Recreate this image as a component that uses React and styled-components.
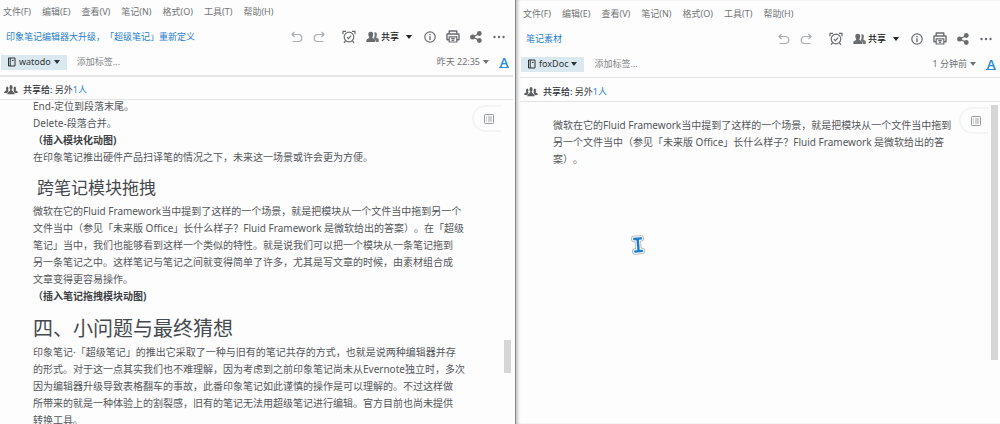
import { createGlobalStyle, styled } from "styled-components";

const menuItems = ["文件(F)", "编辑(E)", "查看(V)", "笔记(N)", "格式(O)", "工具(T)", "帮助(H)"];

export default function App() {
    return (
        <>
            <GlobalStyle />
            <Desktop>
                <NoteWindow
                    title="印象笔记编辑器大升级，「超级笔记」重新定义"
                    notebook="watodo"
                    time="昨天 22:35"
                    thumb={{ top: 240, height: 33 }}
                >
                    <LeftArticle>
                        <p>End-定位到段落末尾。</p>
                        <p>Delete-段落合并。</p>
                        <p><strong>（插入模块化动图)</strong></p>
                        <p>在印象笔记推出硬件产品扫译笔的情况之下，未来这一场景或许会更为方便。</p>
                        <h2>跨笔记模块拖拽</h2>
                        <p>
                            微软在它的Fluid Framework当中提到了这样的一个场景，就是把模块从一个文件当中拖到另一个<br />
                            文件当中（参见「未来版 Office」长什么样子？Fluid Framework 是微软给出的答案）。在「超级<br />
                            笔记」当中，我们也能够看到这样一个类似的特性。就是说我们可以把一个模块从一条笔记拖到<br />
                            另一条笔记之中。这样笔记与笔记之间就变得简单了许多，尤其是写文章的时候，由素材组合成<br />
                            文章变得更容易操作。
                        </p>
                        <p><strong>（插入笔记拖拽模块动图)</strong></p>
                        <h1>四、小问题与最终猜想</h1>
                        <p>
                            印象笔记·「超级笔记」的推出它采取了一种与旧有的笔记共存的方式，也就是说两种编辑器并存<br />
                            的形式。对于这一点其实我们也不难理解，因为考虑到之前印象笔记尚未从Evernote独立时，多次<br />
                            因为编辑器升级导致表格翻车的事故，此番印象笔记如此谨慎的操作是可以理解的。不过这样做<br />
                            所带来的就是一种体验上的割裂感，旧有的笔记无法用超级笔记进行编辑。官方目前也尚未提供<br />
                            转换工具。
                        </p>
                    </LeftArticle>
                </NoteWindow>
                <NoteWindow
                    front
                    title="笔记素材"
                    notebook="foxDoc"
                    time="1 分钟前"
                    thumb={{ top: 3, height: 255 }}
                >
                    <RightArticle>
                        <p>
                            微软在它的Fluid Framework当中提到了这样的一个场景，就是把模块从一个文件当中拖到<br />
                            另一个文件当中（参见「未来版 Office」长什么样子？Fluid Framework 是微软给出的答<br />
                            案）。
                        </p>
                    </RightArticle>
                    <Pointer viewBox="0 0 16 20" aria-hidden="true">
                        <path d="M4.2 4L11 3.4M5.2 16.5L12 15.9M7.6 3.7L8.6 16.2" stroke="#b4b8bc" strokeWidth="6.4" />
                        <path d="M4.2 4L11 3.4M5.2 16.5L12 15.9M7.6 3.7L8.6 16.2" stroke="#f2f2f2" strokeWidth="4.8" />
                        <path d="M4.2 4L11 3.4M5.2 16.5L12 15.9M7.6 3.7L8.6 16.2" stroke="#1b7fd0" strokeWidth="2.4" />
                    </Pointer>
                </NoteWindow>
            </Desktop>
        </>
    )
}

function NoteWindow({ front, title, notebook, time, thumb, children }) {
    return (
        <Window $front={front}>
            <MenuBar>
                {menuItems.map(item => <MenuButton key={item}>{item}</MenuButton>)}
            </MenuBar>
            <TitleRow>
                <Title>{title}</Title>
                <Tools>
                    <Tool aria-label="撤销"><UndoIcon /></Tool>
                    <Tool aria-label="重做"><RedoIcon /></Tool>
                    <Tool aria-label="提醒" $before={17}><AlarmIcon /></Tool>
                    <Tool $before={10}>
                        <PeopleIcon />
                        <span>共享</span>
                    </Tool>
                    <Tool aria-label="共享选项" $before={7}><Caret /></Tool>
                    <Tool aria-label="信息" $before={12}><InfoIcon /></Tool>
                    <Tool aria-label="打印" $before={10}><PrintIcon /></Tool>
                    <Tool aria-label="分享" $before={10}><ShareIcon /></Tool>
                    <Tool aria-label="更多" $before={11}><MoreIcon /></Tool>
                </Tools>
            </TitleRow>
            <TagRow>
                <NotebookButton>
                    <NotebookIcon />
                    {notebook}
                    <Caret />
                </NotebookButton>
                <TagInput aria-label="标签" placeholder="添加标签..." />
                <TimeButton>
                    {time}
                    <Caret />
                </TimeButton>
                <FormatButton aria-label="文字格式">A</FormatButton>
            </TagRow>
            <SharedBar $front={front}>
                <GroupIcon />
                <span><b>共享给:</b> 另外<a href="#members">1人</a></span>
            </SharedBar>
            <Body>
                {children}
                <OutlineButton aria-label="大纲"><OutlineIcon /></OutlineButton>
                <Track>
                    <Thumb $top={thumb.top} $height={thumb.height} />
                </Track>
            </Body>
        </Window>
    )
}

const UndoIcon = () => (
    <Icon viewBox="0 0 12 12" $size={12}>
        <path d="M3.5 1L1 3.5L3.5 6M1 3.5H7.3A3.5 3.5 0 0 1 7.3 10.5H1.5" stroke="#a9adb1" />
    </Icon>
)

const RedoIcon = () => (
    <Icon viewBox="0 0 12 12" $size={12}>
        <path d="M8.5 1L11 3.5L8.5 6M11 3.5H4.7A3.5 3.5 0 0 0 4.7 10.5H10.5" stroke="#a9adb1" />
    </Icon>
)

const AlarmIcon = () => (
    <Icon viewBox="0 0 14 14" $size={14}>
        <circle cx="7" cy="7" r="4.8" />
        <path d="M1 4.2V1.4H4M13 4.2V1.4H10M3.6 10.6L2 12.8M10.4 10.6L12 12.8M5 7.2L6.5 8.6L9.2 5.6" />
    </Icon>
)

const PeopleIcon = () => (
    <Icon viewBox="0 0 13 12" $size={13}>
        <path d="M8.2 1.5C10 .9 11.2 2.2 10.9 4C10.8 5.2 10.3 5.8 10.3 6.5L12.8 8V11H9.7C9.6 8.8 8.8 8.1 7.5 7.4C8.8 5.5 9 3.4 8.2 1.5Z" fill="#75787b" stroke="none" />
        <path d="M4.7 .8C6.8 .8 7.5 2.3 7.1 4.2C6.9 5.4 6.4 6 6.4 7L8.4 8.1C9 8.6 9 9.5 9 11H.3C.3 9.5 .4 8.5 1.2 8.1L3.2 7C3.2 6 2.6 5.3 2.4 4.2C2 2.3 2.7 .8 4.7 .8Z" fill="#696c70" stroke="none" />
    </Icon>
)

const InfoIcon = () => (
    <Icon viewBox="0 0 12 12" $size={12}>
        <circle cx="6" cy="6" r="5.2" />
        <path d="M6 5.2V9M6 3V4.3" strokeWidth="1.4" />
    </Icon>
)

const PrintIcon = () => (
    <Icon viewBox="0 0 14 13" $size={14}>
        <path d="M3.2 3.8V1H10.8V3.8M3.2 9.8H1V4H13V9.8H10.8" strokeWidth="1.4" strokeLinejoin="round" />
        <path d="M3.2 6.8H10.8V12H3.2Z" />
        <path d="M5.2 8.6H8.8M5.8 10.3H8.2" />
    </Icon>
)

const ShareIcon = () => (
    <Icon viewBox="0 0 12 12" $size={12}>
        <path d="M9.3 2.5L2.8 6L9.3 9.5" />
        <g fill="#696c70" stroke="none">
            <circle cx="9.3" cy="2.5" r="2.4" />
            <circle cx="2.6" cy="6" r="2.5" />
            <circle cx="9.3" cy="9.5" r="2.4" />
        </g>
    </Icon>
)

const MoreIcon = () => (
    <Icon viewBox="0 0 12 12" $size={12}>
        <g fill="#696c70" stroke="none">
            <circle cx="1.5" cy="6" r="1.2" />
            <circle cx="6" cy="6" r="1.2" />
            <circle cx="10.5" cy="6" r="1.2" />
        </g>
    </Icon>
)

const NotebookIcon = () => (
    <Icon viewBox="0 0 9 10" $size={9}>
        <path d="M1.5 1H8V9H1.5ZM3.2 1V9M4.8 3.4H6.6" stroke="#2e3336" strokeWidth="1" />
    </Icon>
)

const GroupIcon = () => (
    <Icon viewBox="0 0 14 10" $size={14}>
        <g fill="#5c5f62" stroke="none">
            <ellipse cx="3.2" cy="3.4" rx="1.2" ry="1.9" />
            <ellipse cx="10.8" cy="3.4" rx="1.2" ry="1.9" />
            <ellipse cx="7" cy="2.4" rx="1.5" ry="2.3" />
            <path d="M0 7.8C0 6 2.6 6.2 2.6 4.6H3.8L4.6 5.8L3 8.2ZM14 7.8C14 6 11.4 6.2 11.4 4.6H10.2L9.4 5.8L11 8.2ZM3.3 9.3C3.3 6.6 6.3 6.8 6.3 4.2H7.7C7.7 6.8 10.7 6.6 10.7 9.3Z" />
        </g>
    </Icon>
)

const OutlineIcon = () => (
    <Icon viewBox="0 0 10 10" $size={10}>
        <rect x=".5" y=".5" width="9" height="9" rx=".8" stroke="#95989b" strokeWidth="1" />
        <path d="M2 3H3M4 3H8M2 5H3M4 5H8M2 7H3M4 7H8" stroke="#85898c" strokeWidth=".8" />
    </Icon>
)

const GlobalStyle = createGlobalStyle`
    * {
        box-sizing: border-box;
    }
    body {
        margin: 0;
        font-family: "Noto Sans", "Noto Sans CJK SC", sans-serif;
        text-spacing-trim: space-all;
        background: #fdfdfd;
    }
    button, input {
        font: inherit;
        color: inherit;
        padding: 0;
        border: none;
        background: none;
    }
    a {
        color: #2a87d0;
        text-decoration: none;
    }
`
const Desktop = styled.main`
    display: grid;
    grid-template-columns: 515fr 485fr;
    height: 100vh;
    overflow: hidden;
`
const Window = styled.section`
    display: flex;
    flex-direction: column;
    min-width: 0;
    min-height: 0;
    font-size: 9px;
    line-height: 12px;
    color: #707376;
    background: #fdfdfd;
    padding: ${props => props.$front ? "2px 0 0 4px" : "0 2px 0 0"};
    border-left: ${props => props.$front ? "1px solid #85878a" : "none"};
    box-shadow: ${props => props.$front ? "inset 3px 0 3px -1px #c4c5c6" : "none"};
`
const MenuBar = styled.nav`
    display: flex;
    gap: 11px;
    height: 24px;
    padding-left: 3px;
    align-items: center;
`
const MenuButton = styled.button`
    white-space: nowrap;
`
const TitleRow = styled.header`
    display: flex;
    justify-content: space-between;
    align-items: center;
    height: 25px;
    padding: 0 8px 0 6px;
`
const Title = styled.h1`
    margin: 0;
    font-size: 9px;
    font-weight: 400;
    color: #1e80cf;
    white-space: nowrap;
`
const Tools = styled.div`
    display: flex;
    align-items: center;
    gap: 10px;
`
const Tool = styled.button`
    display: flex;
    align-items: center;
    gap: 2px;
    color: #222;
    font-weight: 500;
    white-space: nowrap;
    margin-left: ${props => props.$before ? `${props.$before - 10}px` : "0"};
`
const Icon = styled.svg`
    display: block;
    flex: none;
    width: ${props => props.$size}px;
    fill: none;
    stroke: #696c70;
    stroke-width: 1.2;
`
const Caret = styled.span`
    border: 3px solid transparent;
    border-top: 4px solid currentColor;
    border-bottom: none;
`
const TagRow = styled.div`
    display: flex;
    align-items: center;
    height: 26px;
    padding: 0 4px 0 1px;
`
const NotebookButton = styled.button`
    display: flex;
    align-items: center;
    gap: 3px;
    height: 15px;
    padding: 0 7px 0 6px;
    color: #2e3336;
    background: #dae8ef;
`
const TagInput = styled.input`
    flex: 1;
    min-width: 0;
    margin-left: 10px;
    &::placeholder {
        color: #808386;
        opacity: 1;
    }
`
const TimeButton = styled.button`
    display: flex;
    align-items: center;
    gap: 3px;
    white-space: nowrap;
`
const FormatButton = styled.button`
    margin-left: 10px;
    width: 10px;
    font-size: 13px;
    font-weight: 600;
    line-height: 10px;
    color: #2b8ddb;
    border-bottom: 1px solid #2b8ddb;
`
const SharedBar = styled.div`
    display: flex;
    align-items: center;
    gap: 5px;
    height: 25px;
    padding: ${props => props.$front ? "5px" : "3px"} 0 0 4px;
    color: #303336;
    border-top: ${props => props.$front ? "1px" : "2px"} solid #e6e6e6;
    border-bottom: 1px solid #e3e3e3;
    b {
        font-weight: 500;
    }
`
const Body = styled.div`
    position: relative;
    display: flex;
    flex: 1;
    min-height: 0;
    overflow: hidden;
`
const Article = styled.article`
    flex: 1;
    min-width: 0;
    font-size: 10px;
    line-height: 17px;
    color: #54575b;
    p {
        margin: 0;
    }
    strong {
        font-weight: 700;
        color: #3c3f43;
    }
    h1, h2 {
        font-weight: 400;
        line-height: 26px;
        color: #46494e;
    }
    h1 {
        margin: 11px 0 2px;
        font-size: 20px;
    }
    h2 {
        margin: 9px 0 2px;
        padding-left: 4px;
        font-size: 17px;
    }
`
const LeftArticle = styled(Article)`
    margin-top: -2px;
    padding: 0 24px 0 33px;
`
const RightArticle = styled(Article)`
    padding: 15px 32px 0 33px;
`
const OutlineButton = styled.button`
    position: absolute;
    top: 5px;
    right: 12px;
    display: flex;
    align-items: center;
    width: 29px;
    height: 27px;
    padding-left: 10px;
    border: 2px solid #f3f5f5;
    border-right: none;
    border-radius: 14px 0 0 14px;
`
const Track = styled.div`
    width: 9px;
`
const Thumb = styled.div`
    width: 7px;
    height: ${props => props.$height}px;
    margin-top: ${props => props.$top}px;
    background: #d6d6d6;
`
const Pointer = styled.svg`
    position: absolute;
    left: 110px;
    top: 133px;
    width: 16px;
    height: 20px;
    fill: none;
    stroke-linecap: round;
`
